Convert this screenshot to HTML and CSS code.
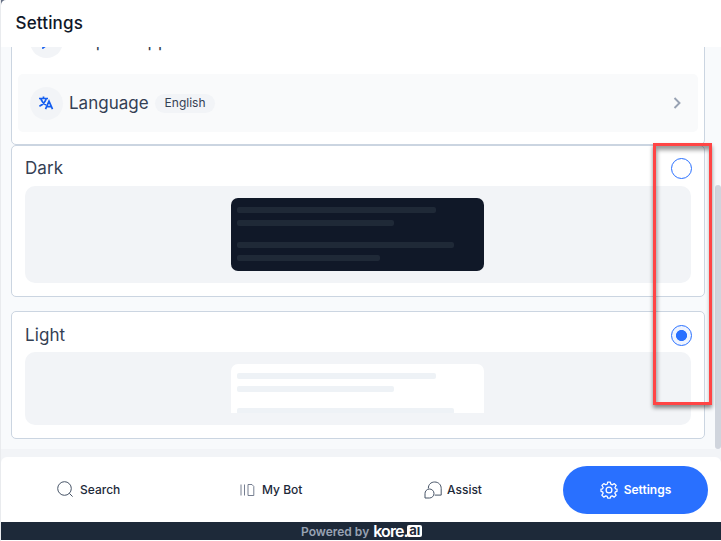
FILE: index.html
```
<!DOCTYPE html>
<html lang="en">
<head>
<meta charset="utf-8">
<title>Settings</title>
<link rel="stylesheet" href="styles.css">
</head>
<body>
<div class="app">
  <header class="header"><h1>Settings</h1></header>
  <main class="content">
    <section class="card options">
      <div class="row help">
        <span class="disc"><svg width="16" height="16" viewBox="0 0 16 16" fill="none" stroke="#155eef" stroke-width="1.6"><path d="M2 2h12v10H8l-4 3v-3H2z"/></svg></span>
        <span class="row-title">Help &amp; Support</span>
      </div>
      <div class="row language">
        <span class="disc"><svg width="16" height="16" viewBox="0 0 16 16" fill="none" stroke="#155eef" stroke-width="1.7"><path d="M1 3.5h9M5.5 1.5v2M2.7 3.5C4 7 6 9 8 10M8.3 3.5C7.3 7.2 5 9.5 1.4 11.3M7.5 14.2l3.5-8 3.5 8M8.7 11.6h4.6"/></svg></span>
        <span class="row-title">Language</span>
        <span class="tag">English</span>
        <svg class="chevron" width="9" height="14" viewBox="0 0 9 14" fill="none" stroke="#98a2b3" stroke-width="1.9"><path d="M1.5 2l5 5-5 5"/></svg>
      </div>
    </section>
    <section class="card theme dark">
      <div class="theme-head"><span>Dark</span><i class="radio"></i></div>
      <div class="preview"><div class="sample"><b class="l1"></b><b class="l2"></b><b class="l3"></b><b class="l4"></b></div></div>
    </section>
    <section class="card theme light">
      <div class="theme-head"><span>Light</span><i class="radio checked"></i></div>
      <div class="preview"><div class="sample"><b class="l1"></b><b class="l2"></b><b class="l3"></b></div></div>
    </section>
    <div class="scrollbar"></div>
  </main>
  <div class="nav-wrap">
  <nav class="nav">
    <a class="item search"><svg width="17" height="17" viewBox="0 0 17 17" fill="none" stroke="#475467" stroke-width="1"><circle cx="7.5" cy="7.5" r="6.8"/><path d="M12.3 12.3l3.3 3.3"/></svg>Search</a>
    <a class="item bot"><svg width="15" height="14" viewBox="0 0 15 14" fill="none" stroke="#667085" stroke-width=".9"><path d="M1 1.5v11M4.5 1.5v11M8 1.5h4l1.8 2v9H8z"/></svg>My Bot</a>
    <a class="item assist"><svg width="18" height="18" viewBox="0 0 18 18" fill="none" stroke="#475467" stroke-width="1"><path d="M4.4 7.4C4.2 3.5 7 1 10.7 1c3.8 0 6.5 2.8 6.5 6.5v6.6h-6.5"/><path d="M1 17v-4.3a4.5 4.5 0 1 1 4.5 4.3z"/></svg>Assist</a>
    <a class="item active"><svg width="18" height="18" viewBox="0 0 18 18" fill="none" stroke="#fff" stroke-width="1.25" stroke-linejoin="round"><path d="M7.7 1h2.6l.5 2.2 1.5.6 2-1.2 1.9 1.9-1.3 2 .6 1.3L17 8v2.3l-1.6.5-.6 1.4 1.3 2-1.9 1.9-2-1.2-1.4.5-.5 1.8H7.7l-.5-1.8-1.4-.5-2 1.2-1.9-1.9 1.3-2-.6-1.4L1 10.3V8l1.6-.2.6-1.3-1.3-2 1.9-1.9 2 1.2 1.4-.6z"/><circle cx="9" cy="9" r="2.9"/></svg>Settings</a>
  </nav>
  </div>
  <footer class="footer"><span>Powered by</span><strong>kore.</strong><em>aı</em></footer>
  <div class="highlight"></div>
</div>
</body>
</html>
```
FILE: styles.css
```
* { box-sizing: border-box; }
body { margin: 0; background: #fff; font-family: Inter, "Liberation Sans", sans-serif; }
.app { position: relative; width: 721px; height: 541px; display: flex; flex-direction: column; overflow: hidden; border-left: 1px solid #e9ebee; }
.header { height: 47px; flex: none; padding: 0 15px 2px 14.5px; display: flex; align-items: center; background: #fff; border-radius: 5px 0 0; box-shadow: -3px -3px 0 3px #667085; }
h1 { margin: 0; font-size: 17px; line-height: 24px; font-weight: 500; letter-spacing: .15px; color: #101828; }
.content { position: relative; height: 402px; flex: none; padding: 0 16px 10px 10px; display: flex; flex-direction: column; justify-content: flex-end; overflow: hidden; background: #f8fafc; }
.card { flex: none; border: 1px solid #cbd5e1; border-radius: 5px; background: #fff; }
.options { padding: 6px 6px 12px; }
.row { height: 58px; padding: 0 12px; display: flex; align-items: center; border-radius: 5px; }
.help { margin-bottom: 4px; }
.language { background: #f9fafb; padding-right: 16px; }
.disc { width: 33px; height: 33px; border-radius: 50%; background: #f2f4f7; display: flex; align-items: center; justify-content: center; }
.language .disc svg { margin-right: 1px; }
.row-title { margin-left: 6px; font-size: 17px; color: #344054; }
.tag { margin-left: 6px; height: 19px; line-height: 18px; padding: 0 10px; border-radius: 10px; background: #f2f4f7; font-size: 12px; color: #344054; }
.chevron { margin-left: auto; }
.theme { padding: 8px 13px 13px; }
.theme-head { height: 32px; display: flex; align-items: center; justify-content: space-between; font-size: 17px; letter-spacing: .1px; color: #344054; }
.dark .theme-head { padding-bottom: 4px; }
.light .theme-head { padding-bottom: 2px; }
.radio { width: 21px; height: 21px; margin-right: -1px; border: 1px solid #2970ff; border-radius: 50%; background: #fff; }
.checked { background: radial-gradient(circle, #2970ff 0 5.2px, #eff4ff 5.9px); }
.preview { border-radius: 10px; background: #f2f4f7; padding: 12px 1px 12px 0; display: flex; justify-content: center; }
.dark { height: 152px; margin-bottom: 14px; }
.light { height: 128px; }
.sample { width: 253px; height: 73px; padding: 9px 6px; border-radius: 7px; background: #101828; }
.sample b { display: block; height: 6px; margin-bottom: 7px; border-radius: 2px; background: #1f2937; }
.sample .l1 { width: 199px; }
.sample .l2 { width: 157px; margin-bottom: 16px; }
.sample .l3 { width: 217px; }
.sample .l4 { width: 143px; }
.light .sample { height: 49px; border-radius: 7px 7px 0 0; background: #fff; overflow: hidden; }
.light .sample b { background: #eef2f6; }
.scrollbar { position: absolute; right: 0; top: 138px; width: 6px; height: 264px; border-radius: 3px; background: #d0d5dd; }
.nav-wrap { flex: none; height: 73px; padding-top: 8px; background: #f2f4f7; }
.nav { height: 65px; display: flex; align-items: center; background: #fff; border-radius: 6px 6px 0 0; }
.item { display: flex; align-items: center; gap: 6px; font-size: 12px; font-weight: 500; color: #1d2939; }
.search { width: 183px; margin-left: 56px; }
.bot { width: 184px; gap: 7px; }
.assist { width: 139px; gap: 5px; }
.active { width: 145px; height: 48px; justify-content: center; border-radius: 24px; background: #2970ff; color: #fff; font-weight: 600; }
.footer { height: 18px; flex: none; display: flex; align-items: center; padding-left: 300px; background: #1d2939; font-size: 12px; color: #98a2b3; font-weight: 600; }
.footer strong { width: 34px; margin-left: 4px; font-size: 16px; line-height: 18px; font-weight: 600; color: #fff; letter-spacing: -.9px; }
.footer em { width: 15px; height: 12px; text-align: center; margin-top: -1px; font: 700 13px/11px Inter, sans-serif; border-radius: 2px; background: #fff; color: #1d2939; }
.highlight { position: absolute; left: 652px; top: 143px; width: 59px; height: 262px; border: 3px solid #ff4545; box-shadow: 0 3px 4px rgba(0,0,0,.45), inset 1px 4px 4px rgba(0,0,0,.4); }
```
